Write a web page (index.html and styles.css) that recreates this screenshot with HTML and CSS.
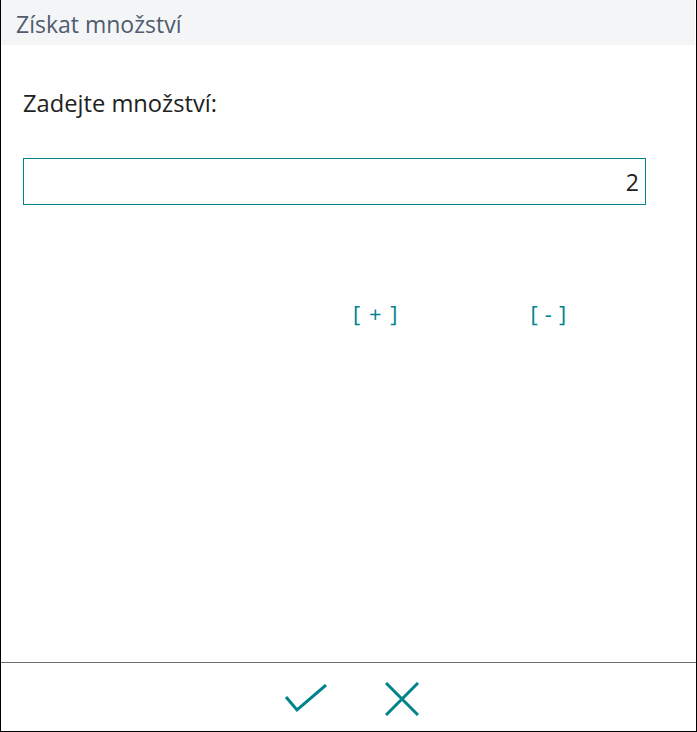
FILE: index.html
```html
<!DOCTYPE html>
<html lang="cs">
<head>
    <meta charset="UTF-8">
    <meta name="viewport" content="width=device-width, initial-scale=1.0">
    <title>Získat množství</title>
    <link rel="stylesheet" href="styles.css">
</head>
<body>
<div class="dialog">
    <div class="dialog-header">Získat množství</div>

    <div class="dialog-body">
        <label class="field-label" for="qty">Zadejte množství:</label>
        <input class="qty-input" id="qty" type="text" value="2">

        <div class="step-buttons">
            <a class="step plus" href="#">[ + ]</a>
            <a class="step minus" href="#">[ - ]</a>
        </div>
    </div>

    <div class="dialog-footer">
        <button class="icon-btn" title="OK">
            <svg width="44" height="30" viewBox="0 0 44 30">
                <path d="M2 13 L13 26 L42 1" fill="none" stroke="#00838a" stroke-width="3"/>
            </svg>
        </button>
        <button class="icon-btn" title="Zrušit">
            <svg width="34" height="34" viewBox="0 0 34 34">
                <path d="M1 1 L33 33 M33 1 L1 33" fill="none" stroke="#00838a" stroke-width="3"/>
            </svg>
        </button>
    </div>
</div>
</body>
</html>
```

FILE: styles.css
```css
body {
    margin: 0;
    font-family: "Open Sans", "Noto Sans", sans-serif;
    background: #fff;
}

.dialog {
    width: 697px;
    height: 732px;
    box-sizing: border-box;
    border: 1px solid #000;
    border-top: none;
    display: flex;
    flex-direction: column;
}

.dialog-header {
    height: 45px;
    box-sizing: border-box;
    background: #f4f5f7;
    color: #505c6d;
    font-size: 23px;
    line-height: 41px;
    padding: 4px 0 0 15px;
    margin-right: 1px;
}

.dialog-body {
    flex: 1;
    padding: 42px 50px 0 22px;
    display: flex;
    flex-direction: column;
}

.field-label {
    font-size: 23.7px;
    color: #212121;
    line-height: 32px;
}

.qty-input {
    margin-top: 39px;
    height: 47px;
    box-sizing: border-box;
    border: 1px solid #00848a;
    font-family: inherit;
    font-size: 23px;
    color: #212121;
    text-align: right;
    padding: 0 6px;
    outline: none;
}

.step-buttons {
    display: flex;
    margin-top: 93px;
    padding-left: 330px;
    gap: 133px;
}

.step {
    color: #00838f;
    text-decoration: none;
    font-size: 22px;
    line-height: 30px;
    word-spacing: 3px;
}

.step.minus {
    word-spacing: 1.5px;
}

.dialog-footer {
    height: 68px;
    border-top: 1px solid #6e6e6e;
    display: flex;
    justify-content: center;
    align-items: center;
    gap: 57px;
    padding-left: 6px;
}

.icon-btn {
    background: none;
    border: none;
    padding: 0;
    display: flex;
    margin-top: 4px;
}
```
